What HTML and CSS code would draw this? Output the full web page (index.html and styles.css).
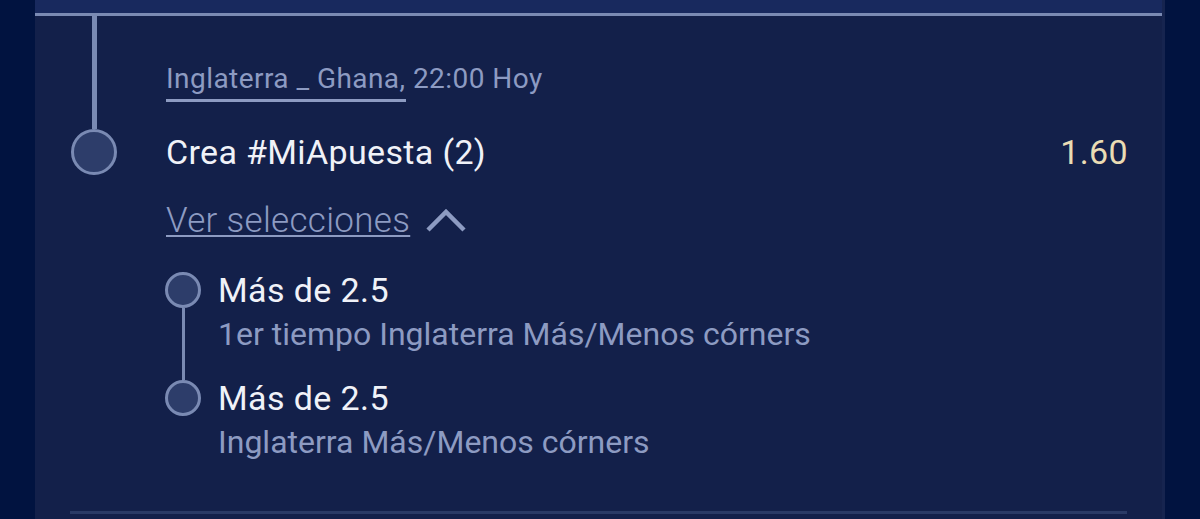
FILE: index.html
```html
<!DOCTYPE html>
<html lang="es">
<head>
<meta charset="utf-8">
<title>Crea #MiApuesta</title>
<link rel="stylesheet" href="styles.css">
</head>
<body>
<div class="card">
  <div class="card-top"></div>
  <div class="bet-head">
    <div class="rail">
      <div class="rail-line"></div>
      <div class="rail-dot"></div>
    </div>
    <div class="bet-main">
      <div class="event"><span class="event-name">Inglaterra _ Ghana,</span> 22:00 Hoy</div>
      <div class="bet-title">
        <span class="bet-name">Crea #MiApuesta (2)</span>
        <span class="odds">1.60</span>
      </div>
    </div>
  </div>
  <div class="bet-body">
    <div class="toggle">
      <span class="toggle-text">Ver selecciones</span>
      <svg class="chevron" width="40" height="24" viewBox="0 0 40 24"><polyline points="2,22 20,4 38,22" fill="none" stroke="#8d9bc2" stroke-width="4.5"/></svg>
    </div>
    <div class="selections">
      <div class="sel sel-first">
        <div class="sel-rail">
          <div class="sel-seg"></div>
          <div class="sel-dot"></div>
          <div class="sel-line"></div>
        </div>
        <div class="sel-text">
          <div class="sel-title">Más de 2.5</div>
          <div class="sel-sub">1er tiempo Inglaterra Más/Menos córners</div>
        </div>
      </div>
      <div class="sel sel-last">
        <div class="sel-rail">
          <div class="sel-seg"></div>
          <div class="sel-dot"></div>
          <div class="sel-line"></div>
        </div>
        <div class="sel-text">
          <div class="sel-title">Más de 2.5</div>
          <div class="sel-sub">Inglaterra Más/Menos córners</div>
        </div>
      </div>
    </div>
  </div>
  <div class="separator"></div>
</div>
</body>
</html>
```
FILE: styles.css
```css
html, body {
  margin: 0;
  padding: 0;
  background: #011340;
  height: 100%;
  overflow: hidden;
}
body {
  font-family: Roboto, "Noto Sans", sans-serif;
}
.card {
  margin: 0 35px;
  background: #13204a;
  min-height: 519px;
  box-sizing: border-box;
  border-right: 3px solid #16244f;
}
.card-top {
  height: 13px;
  background: #18295e;
  border-bottom: 3px solid #7a8ab3;
}
.bet-head {
  display: flex;
  padding-left: 36px;
}
.rail {
  width: 46px;
  display: flex;
  flex-direction: column;
  align-items: center;
  flex: none;
}
.rail-line {
  flex: 1;
  width: 5px;
  background: #7a8ab3;
}
.rail-dot {
  width: 46px;
  height: 46px;
  box-sizing: border-box;
  border-radius: 50%;
  border: 3px solid #7a8ab3;
  background: #2d3d6a;
}
.bet-main {
  flex: 1;
  margin-left: 49px;
  padding-right: 34px;
}
.event {
  padding-top: 47px;
  font-size: 28px;
  line-height: 32px;
  letter-spacing: 0.45px;
  color: #8d9bc2;
}
.event-name {
  display: inline-block;
  padding-bottom: 4px;
  border-bottom: 3px solid #8d9bc2;
}
.bet-title {
  margin-top: 27px;
  height: 46px;
  display: flex;
  justify-content: space-between;
  align-items: center;
  font-size: 34px;
  line-height: 46px;
  letter-spacing: 0.35px;
}
.bet-name {
  color: #f0f2f8;
}
.odds {
  color: #eadcb4;
}
.bet-body {
  padding-left: 131px;
}
.toggle {
  margin-top: 26px;
  display: flex;
  align-items: center;
  height: 40px;
}
.toggle-text {
  font-size: 35px;
  line-height: 40px;
  font-weight: 300;
  letter-spacing: 0.3px;
  color: #8d9bc2;
  text-decoration: underline;
  text-decoration-thickness: 2px;
  text-underline-offset: 3px;
}
.chevron {
  margin-left: 16px;
  margin-top: -2px;
}
.selections {
  margin-top: 27px;
}
.sel {
  display: flex;
}
.sel-rail {
  width: 36px;
  flex: none;
  display: flex;
  flex-direction: column;
  align-items: center;
  margin-left: -1px;
}
.sel-seg {
  height: 4px;
  width: 3px;
  background: #7a8ab3;
}
.sel-dot {
  width: 36px;
  height: 36px;
  box-sizing: border-box;
  border-radius: 50%;
  border: 3px solid #7a8ab3;
  background: #2d3d6a;
}
.sel-line {
  flex: 1;
  width: 3px;
  background: #7a8ab3;
}
.sel-first .sel-seg,
.sel-last .sel-line {
  background: transparent;
}
.sel-text {
  margin-left: 17px;
}
.sel-first .sel-text {
  padding-bottom: 20px;
}
.sel-title {
  font-size: 34px;
  line-height: 44px;
  letter-spacing: 0.4px;
  color: #f0f2f8;
}
.sel-sub {
  font-size: 32px;
  line-height: 44px;
  color: #8d9bc2;
}
.separator {
  margin: 47px 35px 0;
  height: 3px;
  background: #2a3a66;
}
```
